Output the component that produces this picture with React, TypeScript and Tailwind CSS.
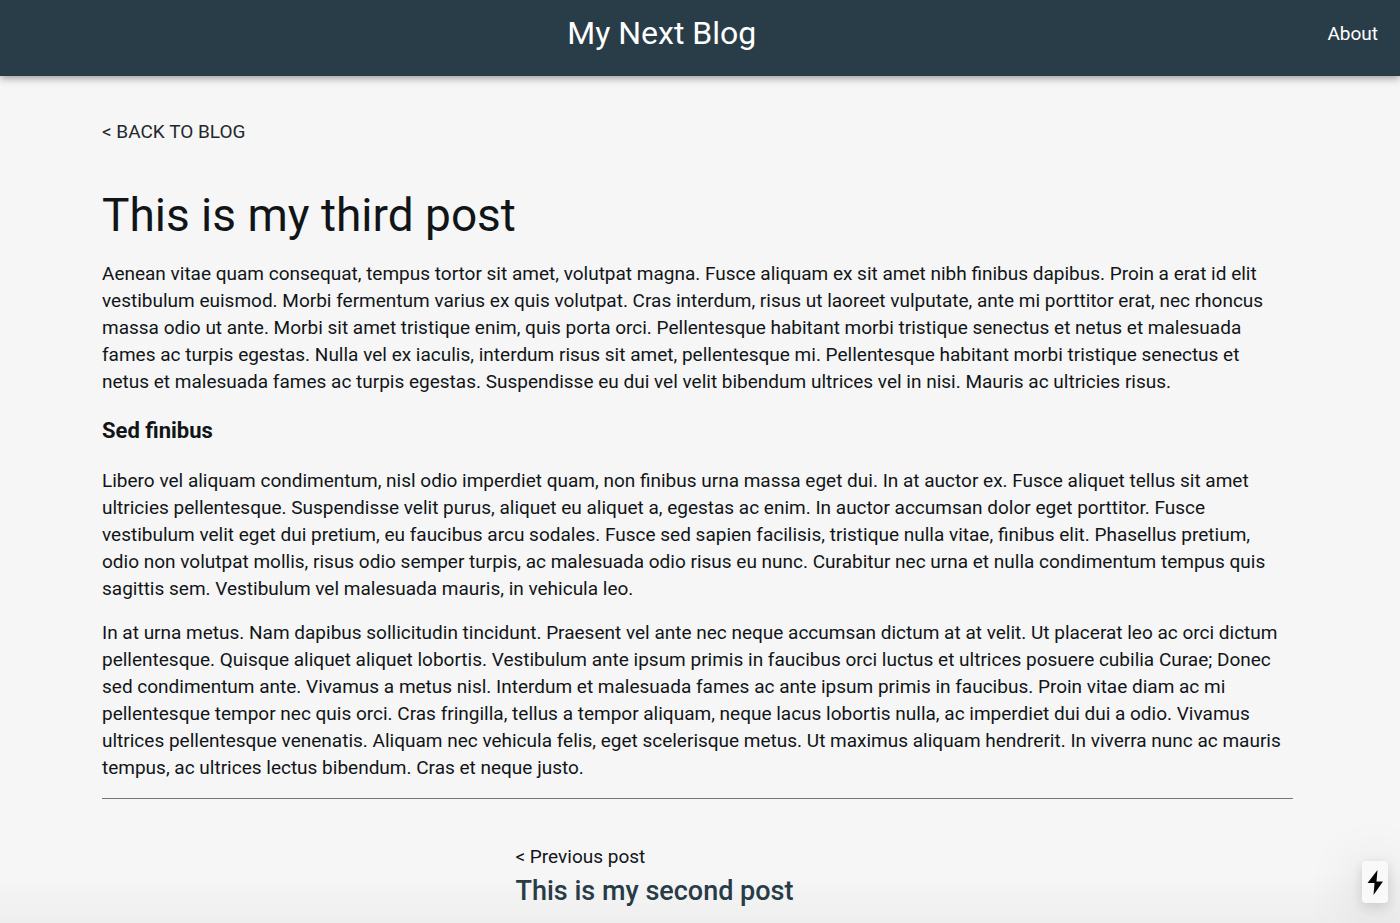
const intro =
  "Aenean vitae quam consequat, tempus tortor sit amet, volutpat magna. Fusce aliquam ex sit amet nibh finibus dapibus. Proin a erat id elit vestibulum euismod. Morbi fermentum varius ex quis volutpat. Cras interdum, risus ut laoreet vulputate, ante mi porttitor erat, nec rhoncus massa odio ut ante. Morbi sit amet tristique enim, quis porta orci. Pellentesque habitant morbi tristique senectus et netus et malesuada fames ac turpis egestas. Nulla vel ex iaculis, interdum risus sit amet, pellentesque mi. Pellentesque habitant morbi tristique senectus et netus et malesuada fames ac turpis egestas. Suspendisse eu dui vel velit bibendum ultrices vel in nisi. Mauris ac ultricies risus.";

const section = {
  heading: "Sed finibus",
  paragraphs: [
    "Libero vel aliquam condimentum, nisl odio imperdiet quam, non finibus urna massa eget dui. In at auctor ex. Fusce aliquet tellus sit amet ultricies pellentesque. Suspendisse velit purus, aliquet eu aliquet a, egestas ac enim. In auctor accumsan dolor eget porttitor. Fusce vestibulum velit eget dui pretium, eu faucibus arcu sodales. Fusce sed sapien facilisis, tristique nulla vitae, finibus elit. Phasellus pretium, odio non volutpat mollis, risus odio semper turpis, ac malesuada odio risus eu nunc. Curabitur nec urna et nulla condimentum tempus quis sagittis sem. Vestibulum vel malesuada mauris, in vehicula leo.",
    "In at urna metus. Nam dapibus sollicitudin tincidunt. Praesent vel ante nec neque accumsan dictum at at velit. Ut placerat leo ac orci dictum pellentesque. Quisque aliquet aliquet lobortis. Vestibulum ante ipsum primis in faucibus orci luctus et ultrices posuere cubilia Curae; Donec sed condimentum ante. Vivamus a metus nisl. Interdum et malesuada fames ac ante ipsum primis in faucibus. Proin vitae diam ac mi pellentesque tempor nec quis orci. Cras fringilla, tellus a tempor aliquam, neque lacus lobortis nulla, ac imperdiet dui dui a odio. Vivamus ultrices pellentesque venenatis. Aliquam nec vehicula felis, eget scelerisque metus. Ut maximus aliquam hendrerit. In viverra nunc ac mauris tempus, ac ultrices lectus bibendum. Cras et neque justo.",
  ],
};

function Header() {
  return (
    <header className="flex items-center gap-1 bg-[#293d48] pt-[9px] pr-[22px] pb-[19px] text-white shadow-[0_2px_8px_rgba(0,0,0,0.4)]">
      <a href="#home" className="flex-1 text-center text-[32px] leading-[48px]">
        My Next Blog
      </a>
      <a href="#about">About</a>
    </header>
  );
}

function QuickActionButton() {
  return (
    <button
      type="button"
      aria-label="Quick actions"
      className="fixed right-3 bottom-5 flex h-[42px] w-[26px] items-center justify-center rounded bg-[#f9f9f9] shadow-[0_4px_14px_rgba(0,0,0,0.14),0_8px_56px_rgba(0,0,0,0.2)]"
    >
      <svg viewBox="0 0 16 26" className="h-[26px] w-4" aria-hidden="true">
        <path d="M10.5 1 0.5 14H7.5L6.5 26 16 12.5H9.5Z" fill="#05080a" />
      </svg>
    </button>
  );
}

export default function App() {
  return (
    <div className="min-h-screen bg-[#f6f6f6] font-['Roboto',sans-serif] text-[19px] leading-[27px] text-[#111518]">
      <Header />
      <main className="pt-[42px] pr-[107px] pb-3 pl-[102px]">
        <a href="#blog" className="text-[#22292d]">
          &lt; BACK TO BLOG
        </a>
        <article className="pr-2">
          <h1 className="mt-[42px] mb-[17px] text-[46px] leading-[56px]">This is my third post</h1>
          <p>{intro}</p>
          <h2 className="my-[22px] text-[22px] leading-[28px] font-bold">{section.heading}</h2>
          <div className="flex flex-col gap-[17px]">
            {section.paragraphs.map((text) => (
              <p key={text}>{text}</p>
            ))}
          </div>
        </article>
        <hr className="mt-[17px] border-[#777]" />
        <nav aria-label="Posts" className="mt-11 flex justify-center pr-[86px]">
          <a href="#second-post">
            <span className="block">&lt; Previous post</span>
            <strong className="mt-[2px] block text-[27px] leading-[38px] font-medium text-[#293d48]">
              This is my second post
            </strong>
          </a>
        </nav>
      </main>
      <div className="pointer-events-none fixed inset-x-0 bottom-0 h-12 bg-linear-to-t from-black/3 to-transparent" />
      <QuickActionButton />
    </div>
  );
}
